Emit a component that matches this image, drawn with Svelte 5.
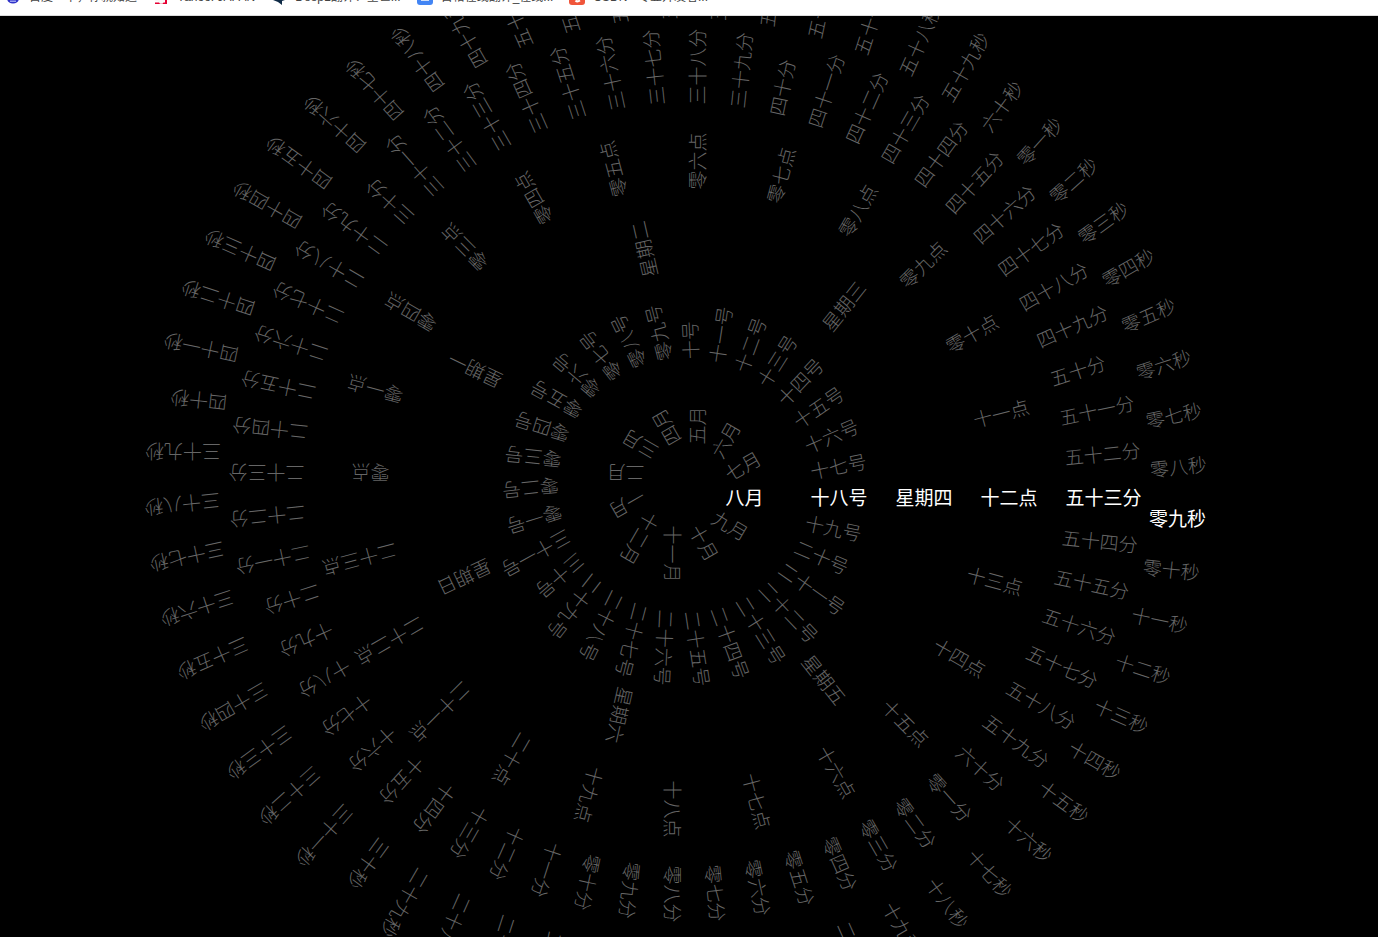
<script lang="ts">
	const cn = ['', '一', '二', '三', '四', '五', '六', '七', '八', '九'];
	const pad = (n: number) => {
		if (n === 0) return '零';
		if (n < 10) return '零' + cn[n];
		if (n === 10) return '零十';
		const tens = Math.floor(n / 10);
		return (tens === 1 ? '十' : cn[tens] + '十') + cn[n % 10];
	};
	const plain = ['一', '二', '三', '四', '五', '六', '七', '八', '九', '十', '十一', '十二'];
	// the date ring writes 10 without the leading zero
	const date = (n: number) => (n === 10 ? '十' : pad(n));
	// the page's hour list really does say 零四 in the slot for 2
	const hour = (n: number) => (n === 2 ? '零四' : pad(n));

	const rings = [
		{ labels: plain.map((m) => m + '月'), cur: 7, r: 40.5, dy: 0 },
		{ labels: Array.from({ length: 31 }, (_, i) => date(i + 1) + '号'), cur: 17, r: 125.5, dy: 0 },
		{ labels: ['一', '二', '三', '四', '五', '六', '日'].map((d) => '星期' + d), cur: 3, r: 210.5, dy: 0 },
		{ labels: Array.from({ length: 24 }, (_, i) => hour(i) + '点'), cur: 12, r: 295.5, dy: 0 },
		{ labels: Array.from({ length: 60 }, (_, i) => pad(i + 1) + '分'), cur: 52, r: 380.5, dy: 0 },
		{ labels: Array.from({ length: 60 }, (_, i) => pad(i + 1) + '秒'), cur: 8, r: 464, dy: 21 }
	];

	const bookmarks = [
		{ icon: 'baidu', label: '百度一下，你就知道' },
		{ icon: 'yahoo', label: 'Yahoo! JAPAN' },
		{ icon: 'deepl', label: 'DeepL翻译：全世...' },
		{ icon: 'gtrans', label: '百格在线翻译_在线...' },
		{ icon: 'csdn', label: 'CSDN - 专业开发者...' }
	];
</script>

<div class="page">
	<nav class="bookmarks">
		{#each bookmarks as b}
			<span class="bookmark">
				<svg class="favicon" viewBox="0 0 16 16" aria-hidden="true">
					{#if b.icon === 'baidu'}
						<path d="M2 9c0-4 3-8 6-8s6 4 6 8c0 3-2 5.500-6 5.500S2 12 2 9z" fill="#2f32c9" />
						<path d="M5 11.500h6v1.500H5z" fill="#9aa0f0" />
					{:else if b.icon === 'yahoo'}
						<path d="M2 2h12v10h-3l-1 3H6l-1-3H2z" fill="#f8f8f8" />
						<path d="M2 13.500h4l1 1.200h2.500l1-1.200h2V15H2zM12 11h2v4h-2z" fill="#e60033" />
					{:else if b.icon === 'deepl'}
						<path d="M2 3l6-3 6 3v8l-3 1v4l-4-3-5-2z" fill="#0f2b46" />
					{:else if b.icon === 'gtrans'}
						<rect x="0" y="0" width="16" height="16" rx="3" fill="#4285f4" />
						<path d="M4 10h8v2H4z" fill="#cfe0fc" />
					{:else}
						<rect x="0" y="0" width="16" height="16" rx="3" fill="#f0553a" />
						<path d="M11 11.500c-1.500 1-3.500 1-4.500 0" fill="none" stroke="#fff" stroke-width="2" />
					{/if}
				</svg>
				<span class="title">{b.label}</span>
			</span>
		{/each}
	</nav>
	<main class="clock">
		{#each rings as ring}
			{#each ring.labels as label, i}
				<span
					class="tick"
					class:now={i === ring.cur}
					style="transform: rotate({((i - ring.cur) * 360) / ring.labels.length}deg) translate({ring.r}px, {ring.dy}px)"
				>{label}</span>
			{/each}
		{/each}
	</main>
</div>

<style>
	:global(body) {
		background: #000;
	}

	.page {
		height: 937px;
		display: flex;
		flex-direction: column;
		overflow: hidden;
	}

	.bookmarks {
		flex: none;
		height: 15px;
		display: flex;
		gap: 16px;
		padding-left: 5px;
		background: #fff;
		border-bottom: 1px solid #dcdcdc;
		overflow: hidden;
		font: 12px 'Liberation Sans', 'Noto Sans CJK SC', sans-serif;
		color: #444;
	}
	.bookmark {
		display: flex;
		gap: 8px;
		height: 16px;
		margin-top: -11px;
		white-space: nowrap;
	}
	.favicon {
		flex: none;
		width: 16px;
		height: 16px;
	}
	.title {
		line-height: 16px;
	}

	.clock {
		flex: 1;
		position: relative;
		background: #000;
		overflow: hidden;
		font: 300 19px 'Noto Sans CJK SC', sans-serif;
	}

	.tick {
		position: absolute;
		left: 685px;
		top: 468.5px;
		line-height: 24px;
		white-space: nowrap;
		color: #666;
		transform-origin: 0 0;
	}
	.tick.now {
		color: #fff;
		font-weight: 400;
	}
</style>
